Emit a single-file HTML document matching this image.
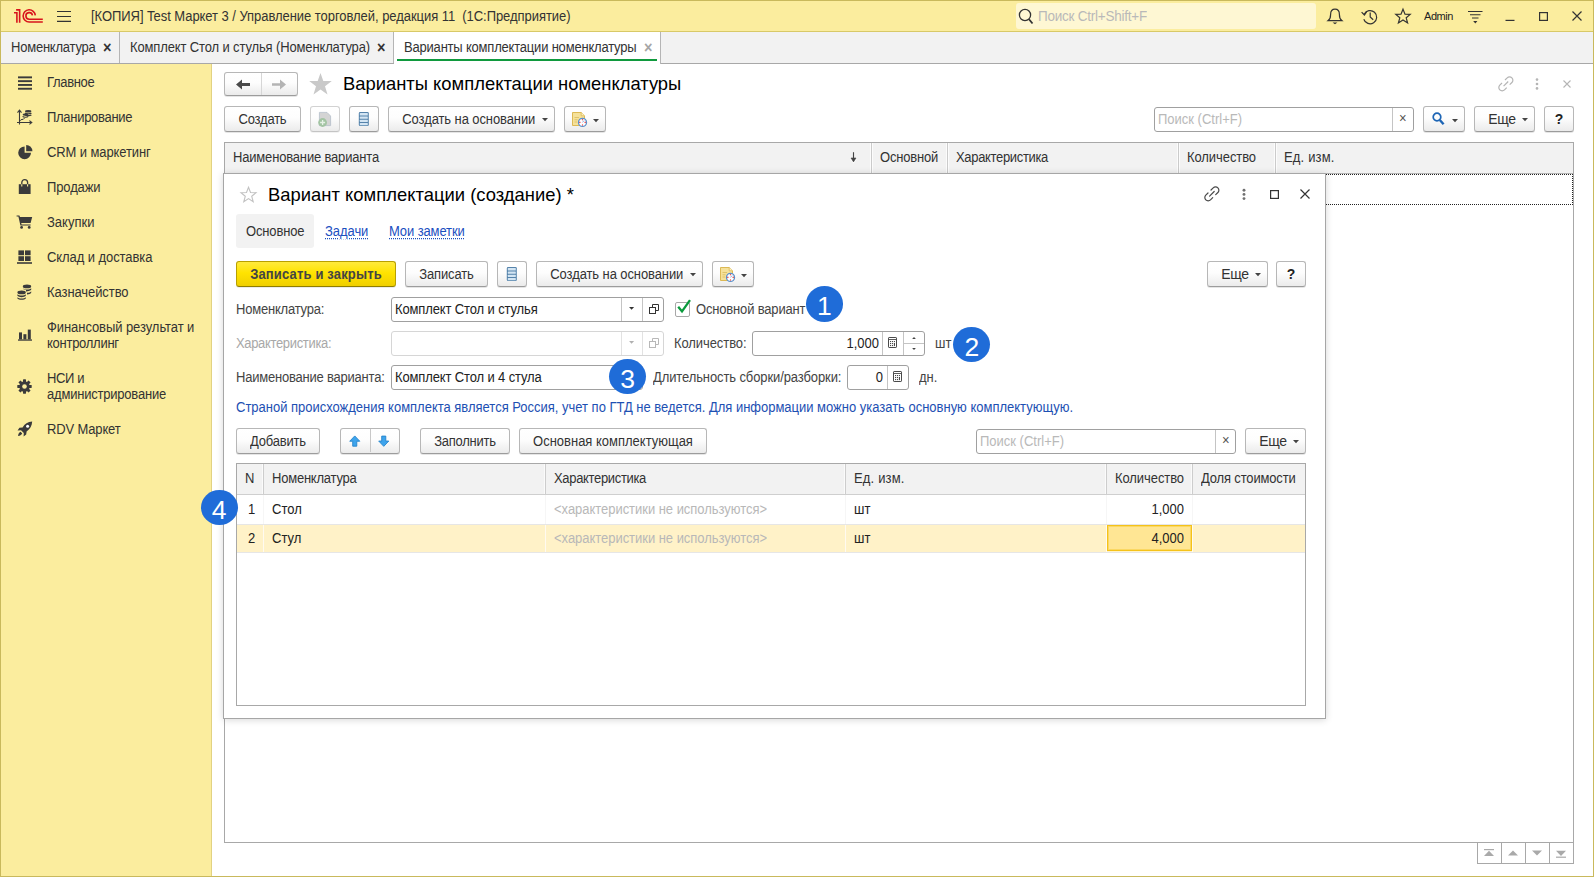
<!DOCTYPE html>
<html lang="ru">
<head>
<meta charset="utf-8">
<title style="letter-spacing:-0.199px">Варианты комплектации номенклатуры</title>
<style>
*{box-sizing:border-box;margin:0;padding:0}
html,body{width:1594px;height:877px;overflow:hidden;background:#fff}
body{font-family:"Liberation Sans",sans-serif;font-size:13px;color:#333;position:relative}
.a{position:absolute;white-space:nowrap}
.t{position:absolute;white-space:nowrap;line-height:16px;height:16px;transform:scaleY(1.075);transform-origin:0 12.5px}
.bt{display:inline-block;transform:scaleY(1.075);transform-origin:0 17px}
/* frame */
#frame{left:0;top:0;width:1594px;height:877px;border:1px solid #c9b95c;pointer-events:none;z-index:50}
#titlebar{left:0;top:0;width:1594px;height:32px;background:#fbed9e;border-bottom:1px solid #d8c968}
#tabbar{left:0;top:32px;width:1594px;height:32px;background:#f2f2f2;border-bottom:1px solid #a8a8a8}
#sidebar{left:0;top:64px;width:211px;height:813px;background:#fbed9e}
#sideline{left:211px;top:64px;width:1px;height:813px;background:#e2d282}
.tab{top:32px;height:31px;border-right:1px solid #b5b5b5}
.tab .t{top:8px}
.x{font-weight:bold;font-size:14.5px}
/* buttons */
.btn{position:absolute;height:26px;border:1px solid #b7b7b7;border-bottom-color:#9c9c9c;border-radius:3px;background:linear-gradient(#ffffff 0%,#fdfdfd 45%,#ebebeb 100%);box-shadow:0 1px 0 rgba(0,0,0,.10);text-align:center;line-height:25px;white-space:nowrap;color:#333}
.btn.y{background:linear-gradient(#ffea3d 0%,#ffe300 45%,#f0cf00 100%);border-color:#b8a000;border-bottom-color:#8f7e00;font-weight:bold;box-shadow:0 1px 0 rgba(0,0,0,.08)}
svg.caret{position:relative;display:inline-block;vertical-align:middle;margin-left:6.5px;top:-0.5px;fill:#444}
/* inputs */
.inp{position:absolute;height:25px;border:1px solid #a0a0a0;border-radius:3px;background:#fff}
.inp .v{position:absolute;top:4px;line-height:16px;transform:scaleY(1.075);transform-origin:0 12.5px}
.inp .sep{position:absolute;top:0;width:1px;height:23px;background:#c4c4c4}
.ph{color:#b9b9b9}
/* tables */
.th{position:absolute;background:#f2f2f2;border-right:1px solid #d0d0d0;height:100%}
svg.car{fill:#444}
.circle{position:absolute;width:37.2px;height:35.6px;border-radius:50%;background:#1f6cd8;color:#fff;font-size:26.5px;line-height:41px;text-align:center;z-index:30}
a.lnk{color:#1b4fbf;text-decoration:underline dotted;text-underline-offset:2px}
svg{position:absolute;overflow:visible}
</style>
</head>
<body>
<!-- TITLE BAR -->
<div id="titlebar" class="a"></div>
<div id="tabbar" class="a"></div>
<div id="sidebar" class="a"></div>
<div id="sideline" class="a"></div>
<div id="frame" class="a"></div>


<!-- logo 1C -->
<svg style="left:0;top:0" width="50" height="32" viewBox="0 0 50 32" fill="none" stroke="#d8141c" stroke-width="1.600">
 <path d="M16.100 9.900H19.650V22.800"/>
 <path d="M14 12.800H16.900V22.800"/>
 <path d="M35.300 15.400A6.100 6.100 0 1 0 29.200 22H42.800"/>
 <path d="M32.450 15.400A3.300 3.300 0 1 0 29.200 19.200H42.800"/>
</svg>
<!-- hamburger -->
<svg style="left:57px;top:10px" width="15" height="13" viewBox="0 0 15 13" stroke="#333" stroke-width="1.150"><path d="M0 1.500H14M0 6.450H14M0 11.400H14"/></svg>
<div class="t" style="letter-spacing:-0.048px;left:91px;top:9px;font-size:13px;color:#333;white-space:pre">[КОПИЯ] Test Маркет 3 / Управление торговлей, редакция 11  (1С:Предприятие)</div>
<div class="a" style="left:1016px;top:3px;width:300px;height:26px;background:#fef7d3;border-radius:3px"></div>
<svg style="left:1018px;top:8px" width="16" height="17" viewBox="0 0 16 17" fill="none" stroke="#333" stroke-width="1.3"><circle cx="7" cy="7" r="5.6"/><path d="M11 11.2L14.5 15.5" stroke-width="1.8"/></svg>
<div class="t" style="letter-spacing:-0.233px;left:1038px;top:9px;color:#b9b9b9;font-size:13.5px">Поиск Ctrl+Shift+F</div>
<!-- bell -->
<svg style="left:1327px;top:8px" width="16" height="17" viewBox="0 0 16 17" fill="none" stroke="#333" stroke-width="1.2"><path d="M1.2 12.6 H14.8 C12.6 11 12.4 9 12.4 6.4 C12.4 3.4 10.6 1.2 8 1.2 C5.4 1.2 3.6 3.4 3.6 6.4 C3.6 9 3.4 11 1.2 12.6 Z"/><path d="M5.6 14.4 H10.4 L8 16.2 Z" fill="#333" stroke="none"/></svg>
<!-- history -->
<svg style="left:1361px;top:9px" width="17" height="16" viewBox="0 0 17 16" fill="none" stroke="#333" stroke-width="1.2"><path d="M3.2 5.2 A6.6 6.6 0 1 1 2.8 10.2"/><path d="M0.6 3.2 L3.4 6 L5.6 3.0" /><path d="M9.2 3.6 V8 L12.2 10.8"/></svg>
<!-- star -->
<svg style="left:1395px;top:8px" width="16" height="16" viewBox="0 0 16 16" fill="none" stroke="#333" stroke-width="1.2" stroke-linejoin="miter"><path d="M8 1.2 L10 6.2 L15.2 6.4 L11.2 9.8 L12.6 15 L8 12 L3.4 15 L4.8 9.8 L0.8 6.4 L6 6.2 Z"/></svg>
<div class="t" style="letter-spacing:-0.438px;left:1424px;top:8px;font-size:11px;color:#222">Admin</div>
<!-- filter -->
<svg style="left:1468px;top:10px" width="15" height="14" viewBox="0 0 15 14" fill="none" stroke="#333" stroke-width="1.1"><path d="M0 1.5H14.5M2 4.8H12.5M4 8H10.5"/><path d="M5.2 11 H9.4 L7.3 13.4Z" fill="#333" stroke="none"/></svg>
<!-- window controls -->
<svg style="left:1505px;top:8px" width="10" height="14" viewBox="0 0 10 14" stroke="#333" stroke-width="1.2"><path d="M0.5 12.4H9.5"/></svg>
<svg style="left:1539px;top:12px" width="9" height="9" viewBox="0 0 9 9" fill="none" stroke="#333" stroke-width="1.2"><rect x="0.6" y="0.6" width="7.8" height="7.8"/></svg>
<svg style="left:1572px;top:11px" width="10" height="10" viewBox="0 0 10 10" stroke="#333" stroke-width="1.2"><path d="M0.5 0.5L9.5 9.5M9.5 0.5L0.5 9.5"/></svg>


<div class="a tab" style="left:0;width:120px"></div>
<div class="t" style="letter-spacing:-0.221px;left:11px;top:40px">Номенклатура</div>
<div class="t x" style="left:103px;top:39.500px">×</div>
<div class="a tab" style="left:120px;width:274px"></div>
<div class="t" style="letter-spacing:-0.133px;left:130px;top:40px">Комплект Стол и стулья (Номенклатура)</div>
<div class="t x" style="left:377px;top:39.500px">×</div>
<div class="a tab" style="left:394px;width:267px;background:#fff;height:32px"></div>
<div class="t" style="letter-spacing:-0.199px;left:404px;top:40px">Варианты комплектации номенклатуры</div>
<div class="t x" style="left:644px;top:39.500px;color:#a6a6a6">×</div>
<div class="a" style="left:397px;top:59px;width:260px;height:2px;background:#109a3e"></div>


<svg style="left:18px;top:76px" width="14" height="14" viewBox="0 0 14 14" fill="#3b3b3b"><rect x="0" y="0.4" width="14" height="1.9"/><rect x="0" y="4.2" width="14" height="1.9"/><rect x="0" y="8" width="14" height="1.9"/><rect x="0" y="11.8" width="14" height="1.9"/></svg>
<svg style="left:16px;top:108.600px" width="17" height="17" viewBox="0 0 17 17" fill="none" stroke="#3b3b3b" stroke-width="1.100"><path d="M3.500 1.500V15.500M1.500 3.600L3.500 1.200L5.500 3.600M1 13.500H15.500M13.400 11.600L15.800 13.500L13.400 15.400"/><path d="M4.200 11.600L6 10.200L7 10.600L8.600 9" stroke-width="1"/><ellipse cx="12.200" cy="2.200" rx="3.200" ry="1.300" fill="#3b3b3b" stroke="none"/><path d="M9 4C10 5.100 14.400 5.100 15.400 4M9 5.800C10 6.900 14.400 6.900 15.400 5.800" stroke-width="1.200"/><ellipse cx="9.400" cy="5.600" rx="2.800" ry="1.200" fill="#3b3b3b" stroke="none"/><path d="M6.600 7.400C7.600 8.500 11.200 8.500 12.200 7.400" stroke-width="1.200"/></svg>
<svg style="left:18px;top:145px" width="15" height="15" viewBox="0 0 15 15" fill="#3b3b3b"><path d="M6.6 1.4 A6.4 6.4 0 1 0 13 7.8 H6.6 Z"/><path d="M8.2 0 A6.2 6.2 0 0 1 14.4 6.2 H8.2 Z"/></svg>
<svg style="left:18px;top:179px" width="14" height="16" viewBox="0 0 14 16" fill="#3b3b3b"><path d="M0.8 5.2 H12.6 V15 H0.8 Z"/><path d="M3.8 7.5 V3.6 A2.9 2.9 0 0 1 9.6 3.6 V7.5" fill="none" stroke="#3b3b3b" stroke-width="1.3"/><path d="M3.8 5.2 V7.6 M9.6 5.2V7.6" stroke="#fbed9e" stroke-width="1.1"/></svg>
<svg style="left:16px;top:215px" width="17" height="14" viewBox="0 0 17 14" fill="#3b3b3b"><path d="M0.6 0.4 H3.4 L4 2 H16.2 L14.6 8 H5.2 L5.6 9.4 H14.6 V10.6 H4.4 L2.4 1.6 H0.6 Z"/><circle cx="5.6" cy="12.4" r="1.4"/><circle cx="13.2" cy="12.4" r="1.4"/></svg>
<svg style="left:17px;top:250px" width="15" height="15" viewBox="0 0 15 15" fill="#3b3b3b"><rect x="1.4" y="0.4" width="5.6" height="4.8"/><rect x="8" y="0.4" width="5.6" height="4.8"/><rect x="1.4" y="6.2" width="5.6" height="4.8"/><rect x="8" y="6.2" width="5.6" height="4.8"/><rect x="0" y="12.2" width="15" height="1.6"/></svg>
<svg style="left:17px;top:284px" width="15" height="16" viewBox="0 0 15 16" fill="#3b3b3b"><ellipse cx="10" cy="2.4" rx="4.2" ry="1.9"/><path d="M5.8 4.2C7 6 13 6 14.2 4.2V5.8C13 7.6 9 7.4 9 7.4V5.9C7.4 5.7 6.4 5.2 5.8 4.2ZM10 8.8C12 8.8 13.6 8.2 14.2 7.2V8.8C13.6 9.8 12 10.4 10 10.4Z"/><ellipse cx="4.6" cy="8.4" rx="4.2" ry="1.9"/><path d="M0.4 10.2C1.6 12 7.6 12 8.8 10.2V11.8C7.6 13.6 1.6 13.6 0.4 11.8ZM0.4 13.2C1.6 15 7.6 15 8.8 13.2V14.4C7.6 16.2 1.6 16.2 0.4 14.4Z"/></svg>
<svg style="left:18px;top:329px" width="14" height="12" viewBox="0 0 14 12" fill="#3b3b3b"><rect x="1" y="3.4" width="3" height="7"/><rect x="5.4" y="5.2" width="3" height="5.2"/><rect x="9.8" y="0.6" width="3" height="9.8"/><rect x="0" y="10.4" width="14" height="1.3"/></svg>
<svg style="left:17px;top:379px" width="15" height="15" viewBox="-7.5 -7.5 15 15"><g fill="#3b3b3b"><circle r="5.2"/><g id="gt"><rect x="-1.5" y="-7.2" width="3" height="14.4" rx="0.4"/></g><use href="#gt" transform="rotate(45)"/><use href="#gt" transform="rotate(90)"/><use href="#gt" transform="rotate(135)"/></g><circle r="2.3" fill="#fbed9e"/></svg>
<svg style="left:17px;top:421px" width="16" height="16" viewBox="0 0 16 16" fill="#3b3b3b"><path d="M15.2 0.6C10.8 0.8 7.6 3 5.6 6.4L2.4 6.8L0.6 9.4L4 9.2L6.8 12L6.6 15.4L9.2 13.6L9.6 10.4C13 8.400 15 5 15.2 0.6Z"/><path d="M3.6 10.8C2.4 11.2 1.4 12.6 1 15C3.400 14.6 4.800 13.6 5.2 12.400Z"/><circle cx="10.6" cy="5.2" r="1.5" fill="#fff"/></svg>
<div class="t" style="letter-spacing:-0.325px;left:47px;top:75px;color:#333">Главное</div>
<div class="t" style="letter-spacing:-0.286px;left:47px;top:110px;color:#333">Планирование</div>
<div class="t" style="letter-spacing:-0.104px;left:47px;top:145px;color:#333">CRM и маркетинг</div>
<div class="t" style="letter-spacing:-0.128px;left:47px;top:180px;color:#333">Продажи</div>
<div class="t" style="letter-spacing:-0.001px;left:47px;top:215px;color:#333">Закупки</div>
<div class="t" style="letter-spacing:-0.074px;left:47px;top:250px;color:#333">Склад и доставка</div>
<div class="t" style="letter-spacing:-0.079px;left:47px;top:285px;color:#333">Казначейство</div>
<div class="t" style="letter-spacing:-0.071px;left:47px;top:320px;color:#333">Финансовый результат и</div>
<div class="t" style="letter-spacing:-0.267px;left:47px;top:336px;color:#333">контроллинг</div>
<div class="t" style="letter-spacing:-0.340px;left:47px;top:371px;color:#333">НСИ и</div>
<div class="t" style="letter-spacing:-0.208px;left:47px;top:387px;color:#333">администрирование</div>
<div class="t" style="letter-spacing:-0.159px;left:47px;top:422px;color:#333">RDV Маркет</div>


<!-- nav buttons -->
<div class="btn" style="left:224px;top:72px;width:74px;height:24px"></div>
<div class="a" style="left:261px;top:73px;width:1px;height:22px;background:#d6d6d6"></div>
<svg style="left:236px;top:79px" width="14" height="11" viewBox="0 0 14 11" fill="#4a4a4a"><path d="M0 5.5L6 0.400V4H14V7H6V10.6Z"/></svg>
<svg style="left:272px;top:79px" width="14" height="11" viewBox="0 0 14 11" fill="#b4b4b4"><path d="M14 5.5L8 0.400V4.300H0V6.700H8V10.600Z"/></svg>
<svg style="left:309px;top:73px" width="23" height="22" viewBox="0 0 23 22" fill="#c9c9c9"><path d="M11.5 0L14.300 8H22.800L16 13.200L18.500 21.600L11.500 16.600L4.500 21.600L7 13.200L0.200 8H8.700Z"/></svg>
<div class="a" style="letter-spacing:-0.001px;left:343px;top:73px;font-size:18.4px;line-height:22px;color:#000">Варианты комплектации номенклатуры</div>
<!-- right icons -->
<svg style="left:1498px;top:76px" width="16" height="16" viewBox="0 0 16 16" fill="none" stroke="#b5b5b5" stroke-width="1.2"><path d="M7 4L9.200 1.800A3.300 3.300 0 0 1 13.900 6.500L11.700 8.700"/><path d="M8.700 11.700L6.500 13.900A3.300 3.300 0 0 1 1.800 9.200L4 7"/><path d="M5.600 10.100L10.200 5.500"/></svg>
<svg style="left:1535px;top:78px" width="4" height="12" viewBox="0 0 4 12" fill="#b5b5b5"><circle cx="2" cy="1.600" r="1.300"/><circle cx="2" cy="6" r="1.300"/><circle cx="2" cy="10.400" r="1.300"/></svg>
<svg style="left:1563px;top:80px" width="8" height="8" viewBox="0 0 8 8" stroke="#b5b5b5" stroke-width="1.100"><path d="M0.500 0.500L7.500 7.500M7.500 0.500L0.500 7.500"/></svg>
<!-- toolbar -->
<div class="btn" style="letter-spacing:-0.229px;left:224px;top:106px;width:77px"><span class="bt">Создать</span></div>
<div class="btn" style="left:310px;top:106px;width:30px;border-color:#d2d2d2;border-bottom-color:#c4c4c4;box-shadow:0 1px 0 rgba(0,0,0,.05)"></div>
<svg style="left:318px;top:112px" width="14" height="16" viewBox="0 0 14 16"><path d="M1.400 0.400H9L12.600 4V13.600H1.400Z" fill="#d4d4d4" stroke="#adb9c6" stroke-width="0.700"/><circle cx="4.600" cy="10.500" r="4.400" fill="#a3c4a3"/><path d="M4.600 8V13M2.100 10.500H7.100" stroke="#e6f1e6" stroke-width="1.300"/></svg>
<div class="btn" style="left:349px;top:106px;width:30px"></div>
<svg style="left:358px;top:112px" width="12" height="16" viewBox="0 0 12 16"><rect x="0.800" y="0.100" width="10" height="14" rx="1.300" fill="#5583ab"/><g fill="#d3e5f3"><rect x="1.800" y="1.100" width="8" height="2.300" rx="0.500"/><rect x="1.800" y="4.400" width="8" height="2.300" rx="0.500"/><rect x="1.800" y="7.700" width="8" height="2.300" rx="0.500"/><rect x="1.800" y="11" width="8" height="2.300" rx="0.500"/></g></svg>
<div class="btn" style="letter-spacing:-0.094px;left:388px;top:106px;width:167px;text-align:left;padding-left:13.300px"><span class="bt">Создать на основании</span><svg class="caret" width="6" height="3.300" viewBox="0 0 6 3.300"><path d="M0 0H6L3 3.300Z"/></svg></div>
<div class="btn" style="left:564px;top:106px;width:42px"></div>
<svg style="left:571px;top:111px" width="17" height="17" viewBox="0 0 17 17"><path d="M1.500 1.500H10.200L13.500 4.800V14.500H1.500Z" fill="#f5e19a" stroke="#dcb955" stroke-width="1"/><path d="M10.200 1.500V4.800H13.500" fill="#fbf0c4" stroke="#dcb955" stroke-width="0.800"/><path d="M3.500 6.500H8M3.500 8.800H6.500M3.500 11H6" stroke="#dcbf63" stroke-width="0.900"/><circle cx="11.500" cy="11.400" r="4" fill="#fff" stroke="#5b8fc9" stroke-width="1.300"/><path d="M11.500 8.200V9.300M11.500 13.500V14.600M8.300 11.400H9.400M13.600 11.400H14.700" stroke="#ee2222" stroke-width="1.100"/><path d="M11.500 11.400L13 9.600" stroke="#7aa0d8" stroke-width="0.900"/></svg>
<svg class="car" style="left:593px;top:118.800px" width="6" height="3.300" viewBox="0 0 6 3.300"><path d="M0 0H6L3 3.300Z"/></svg>
<!-- search -->
<div class="inp" style="left:1154px;top:107px;width:260px"><div class="v ph" style="letter-spacing:-0.003px;left:3px;font-size:13px">Поиск (Ctrl+F)</div><div class="sep" style="left:237px"></div><div class="v" style="left:244px;top:3px;font-size:13px;color:#555">×</div></div>
<div class="btn" style="left:1423px;top:106px;width:42px"></div>
<svg style="left:1432px;top:112px" width="13" height="14" viewBox="0 0 13 14" fill="none" stroke="#1d65b5"><circle cx="5" cy="5" r="3.800" stroke-width="1.700"/><path d="M7.800 8L11.600 12.200" stroke-width="2.400"/></svg>
<svg class="car" style="left:1452px;top:118.800px" width="6" height="3.300" viewBox="0 0 6 3.300"><path d="M0 0H6L3 3.300Z"/></svg>
<div class="btn" style="letter-spacing:-0.400px;left:1474px;top:106px;width:61px;font-size:14px;text-align:left;padding-left:13.300px"><span class="bt">Еще</span><svg class="caret" width="6" height="3.300" viewBox="0 0 6 3.300"><path d="M0 0H6L3 3.300Z"/></svg></div>
<div class="btn" style="left:1544px;top:106px;width:30px;font-weight:bold;font-size:14px;color:#222"><span class="bt">?</span></div>
<!-- list table -->
<div class="a" style="left:224px;top:142px;width:1350px;height:701px;border:1px solid #a8a8a8;background:#fff"></div>
<div class="a" style="left:225px;top:143px;width:1348px;height:31px;background:#f2f2f2;border-bottom:1px solid #b4b4b4"></div>
<div class="a" style="left:870px;top:143px;width:3px;height:30px;background:#fcfcfc"></div><div class="a" style="left:871px;top:143px;width:1px;height:30px;background:#cbcbcb"></div>
<div class="a" style="left:946px;top:143px;width:3px;height:30px;background:#fcfcfc"></div><div class="a" style="left:947px;top:143px;width:1px;height:30px;background:#cbcbcb"></div>
<div class="a" style="left:1177px;top:143px;width:3px;height:30px;background:#fcfcfc"></div><div class="a" style="left:1178px;top:143px;width:1px;height:30px;background:#cbcbcb"></div>
<div class="a" style="left:1274px;top:143px;width:3px;height:30px;background:#fcfcfc"></div><div class="a" style="left:1275px;top:143px;width:1px;height:30px;background:#cbcbcb"></div>
<div class="t" style="letter-spacing:-0.175px;left:233px;top:150px">Наименование варианта</div>
<svg style="left:850px;top:151px" width="7" height="12" viewBox="0 0 7 12" fill="none" stroke="#444" stroke-width="1.200"><path d="M3.500 1V10.600M0.900 7.300L3.500 10.600L6.100 7.300" stroke="#fff" stroke-width="2.600" opacity="0.700"/><path d="M3.500 1.200V10.400"/><path d="M1 7L3.500 10.800L6 7Z" fill="#444" stroke-width="0.600"/></svg>
<div class="t" style="letter-spacing:-0.201px;left:880px;top:150px">Основной</div>
<div class="t" style="letter-spacing:-0.333px;left:956px;top:150px">Характеристика</div>
<div class="t" style="letter-spacing:-0.081px;left:1187px;top:150px">Количество</div>
<div class="t" style="letter-spacing:0.167px;left:1284px;top:150px">Ед. изм.</div>
<!-- focused row dotted -->
<div class="a" style="left:225px;top:174px;width:1348px;height:31px;border:1px dotted #222"></div>
<!-- bottom nav -->
<div class="a" style="left:1477px;top:842px;width:97px;height:22px;border:1px solid #a8a8a8;background:#fff"></div>
<div class="a" style="left:1501px;top:843px;width:1px;height:20px;background:#a8a8a8"></div>
<div class="a" style="left:1525px;top:843px;width:1px;height:20px;background:#a8a8a8"></div>
<div class="a" style="left:1549px;top:843px;width:1px;height:20px;background:#a8a8a8"></div>
<svg style="left:1484px;top:849px" width="10" height="8" viewBox="0 0 10 8" fill="#a9a9a9"><rect x="0" y="0" width="10" height="1.200"/><path d="M5 1.800L10 7H0Z"/></svg>
<svg style="left:1508px;top:850px" width="10" height="6" viewBox="0 0 10 6" fill="#a9a9a9"><path d="M5 0.500L10 5.500H0Z"/></svg>
<svg style="left:1532px;top:850px" width="10" height="6" viewBox="0 0 10 6" fill="#a9a9a9"><path d="M5 5.500L10 0.500H0Z"/></svg>
<svg style="left:1556px;top:850px" width="10" height="8" viewBox="0 0 10 8" fill="#a9a9a9"><rect x="0" y="6.600" width="10" height="1.200"/><path d="M5 6L10 0.800H0Z"/></svg>


<div class="a" style="left:223px;top:173px;width:1103px;height:546px;background:#fff;border:1px solid #a6a6a6;box-shadow:0 1px 7px rgba(0,0,0,.16)"></div>
<svg style="left:240px;top:186px" width="17" height="17" viewBox="0 0 17 17" fill="none" stroke="#c2c2c2" stroke-width="1.100"><path d="M8.500 1.200L10.500 6.500L16 6.700L11.700 10.200L13.200 15.700L8.500 12.600L3.800 15.700L5.300 10.200L1 6.700L6.500 6.500Z"/></svg>
<div class="a" style="letter-spacing:0.018px;left:268px;top:184px;font-size:18.400px;line-height:22px;color:#000">Вариант комплектации (создание) *</div>
<svg style="left:1203.500px;top:185.500px" width="16" height="16" viewBox="0 0 16 16" fill="none" stroke="#4a4a4a" stroke-width="1.200" stroke-linecap="round"><path d="M7 4L9.200 1.800A3.300 3.300 0 0 1 13.900 6.500L11.700 8.700"/><path d="M8.700 11.700L6.500 13.900A3.300 3.300 0 0 1 1.800 9.200L4 7"/><path d="M5.600 10.100L10.200 5.500"/></svg>
<svg style="left:1241.600px;top:188px" width="4" height="12" viewBox="0 0 4 12" fill="#707070"><circle cx="2" cy="2.200" r="1.450"/><circle cx="2" cy="6.400" r="1.450"/><circle cx="2" cy="10.600" r="1.450"/></svg>
<svg style="left:1270px;top:190px" width="9" height="9" viewBox="0 0 9 9" fill="none" stroke="#333" stroke-width="1.200"><rect x="0.600" y="0.600" width="7.800" height="7.800"/></svg>
<svg style="left:1300px;top:189px" width="10" height="10" viewBox="0 0 10 10" stroke="#333" stroke-width="1.200"><path d="M0.500 0.500L9.500 9.500M9.500 0.500L0.500 9.500"/></svg>
<!-- dialog tabs -->
<div class="a" style="left:236px;top:214px;width:78px;height:34px;background:#f2f2f2;border-radius:3px"></div>
<div class="t" style="letter-spacing:-0.160px;left:246px;top:224px">Основное</div>
<div class="t" style="left:325px;top:224px"><a class="lnk" style="letter-spacing:-0.059px">Задачи</a></div>
<div class="t" style="left:389px;top:224px"><a class="lnk" style="letter-spacing:-0.111px">Мои заметки</a></div>
<!-- dialog toolbar -->
<div class="btn y" style="letter-spacing:0.159px;left:236px;top:261px;width:160px;color:#444"><span class="bt">Записать и закрыть</span></div>
<div class="btn" style="letter-spacing:-0.145px;left:405px;top:261px;width:83px"><span class="bt">Записать</span></div>
<div class="btn" style="left:497px;top:261px;width:30px"></div>
<svg style="left:506px;top:267px" width="12" height="16" viewBox="0 0 12 16"><rect x="0.800" y="0.100" width="10" height="14" rx="1.300" fill="#5583ab"/><g fill="#d3e5f3"><rect x="1.800" y="1.100" width="8" height="2.300" rx="0.500"/><rect x="1.800" y="4.400" width="8" height="2.300" rx="0.500"/><rect x="1.800" y="7.700" width="8" height="2.300" rx="0.500"/><rect x="1.800" y="11" width="8" height="2.300" rx="0.500"/></g></svg>
<div class="btn" style="letter-spacing:-0.094px;left:536px;top:261px;width:167px;text-align:left;padding-left:13.300px"><span class="bt">Создать на основании</span><svg class="caret" width="6" height="3.300" viewBox="0 0 6 3.300"><path d="M0 0H6L3 3.300Z"/></svg></div>
<div class="btn" style="left:712px;top:261px;width:42px"></div>
<svg style="left:719px;top:266px" width="17" height="17" viewBox="0 0 17 17"><path d="M1.500 1.500H10.200L13.500 4.800V14.500H1.500Z" fill="#f5e19a" stroke="#dcb955" stroke-width="1"/><path d="M10.200 1.500V4.800H13.500" fill="#fbf0c4" stroke="#dcb955" stroke-width="0.800"/><path d="M3.500 6.500H8M3.500 8.800H6.500M3.500 11H6" stroke="#dcbf63" stroke-width="0.900"/><circle cx="11.500" cy="11.400" r="4" fill="#fff" stroke="#5b8fc9" stroke-width="1.300"/><path d="M11.500 8.200V9.300M11.500 13.500V14.600M8.300 11.400H9.400M13.600 11.400H14.700" stroke="#ee2222" stroke-width="1.100"/><path d="M11.500 11.400L13 9.600" stroke="#7aa0d8" stroke-width="0.900"/></svg>
<svg class="car" style="left:741px;top:273.800px" width="6" height="3.300" viewBox="0 0 6 3.300"><path d="M0 0H6L3 3.300Z"/></svg>
<div class="btn" style="letter-spacing:-0.400px;left:1207px;top:261px;width:61px;font-size:14px;text-align:left;padding-left:13.300px"><span class="bt">Еще</span><svg class="caret" width="6" height="3.300" viewBox="0 0 6 3.300"><path d="M0 0H6L3 3.300Z"/></svg></div>
<div class="btn" style="left:1276px;top:261px;width:30px;font-weight:bold;font-size:14px;color:#222"><span class="bt">?</span></div>
<!-- form row 1 -->
<div class="t" style="letter-spacing:-0.205px;left:236px;top:302px;color:#444">Номенклатура:</div>
<div class="inp" style="left:391px;top:297px;width:273px"><div class="v" style="letter-spacing:-0.128px;left:3px;color:#222">Комплект Стол и стулья</div><div class="sep" style="left:229px"></div><div class="sep" style="left:250px"></div><svg class="car" style="left:237px;top:9.300px;fill:#333" width="5.200" height="2.800" viewBox="0 0 6 3.300"><path d="M0 0H6L3 3.300Z"/></svg>
<svg style="left:257px;top:6px" width="10" height="10" viewBox="0 0 10 10" fill="none" stroke="#333" stroke-width="1"><path d="M3.500 3.500V0.500H9.500V6.500H6.500"/><rect x="0.500" y="3.500" width="6" height="6"/></svg></div>
<div class="a" style="left:675px;top:302px;width:15px;height:15px;border:1px solid #a8a8a8;border-radius:2px;background:#fff"></div>
<svg style="left:677px;top:299px" width="15" height="15" viewBox="0 0 15 15" fill="none" stroke="#0a9a3c" stroke-width="2.300"><path d="M1.200 7.800L5 12.400L13 1.200"/></svg>
<div class="t" style="letter-spacing:-0.166px;left:696px;top:302px;color:#444">Основной вариант</div>
<!-- form row 2 -->
<div class="t" style="letter-spacing:-0.338px;left:236px;top:336px;color:#a8a8a8">Характеристика:</div>
<div class="inp" style="left:391px;top:331px;width:273px;border-color:#d6d6d6"><div class="sep" style="left:229px;background:#e2e2e2"></div><div class="sep" style="left:250px;background:#e2e2e2"></div><svg class="car" style="left:237px;top:9.300px;fill:#b0b0b0" width="5.200" height="2.800" viewBox="0 0 6 3.300"><path d="M0 0H6L3 3.300Z"/></svg>
<svg style="left:257px;top:6px" width="10" height="10" viewBox="0 0 10 10" fill="none" stroke="#b8b8b8" stroke-width="1"><path d="M3.500 3.500V0.500H9.500V6.500H6.500"/><rect x="0.500" y="3.500" width="6" height="6"/></svg></div>
<div class="t" style="letter-spacing:-0.085px;left:674px;top:336px;color:#444">Количество:</div>
<div class="inp" style="left:752px;top:331px;width:173px"><div class="v" style="right:45px;color:#222">1,000</div><div class="sep" style="left:129px"></div><div class="sep" style="left:150px"></div><div class="a" style="left:151px;top:11px;width:20px;height:1px;background:#c4c4c4"></div>
<svg style="left:135px;top:5px" width="9" height="11" viewBox="0 0 9 11"><rect x="0.500" y="0.500" width="8" height="10" rx="0.600" fill="#fff" stroke="#4a4a4a"/><path d="M0.500 2.500H8.500" stroke="#4a4a4a" stroke-width="0.900"/><g fill="#4a4a4a"><rect x="2" y="4" width="1.100" height="1.100"/><rect x="3.950" y="4" width="1.100" height="1.100"/><rect x="5.900" y="4" width="1.100" height="1.100"/><rect x="2" y="6" width="1.100" height="1.100"/><rect x="3.950" y="6" width="1.100" height="1.100"/><rect x="2" y="8" width="1.100" height="1.100"/><rect x="3.950" y="8" width="1.100" height="1.100"/><rect x="5.900" y="6" width="1.100" height="3.100"/></g></svg>
<svg style="left:158.800px;top:5px" width="4" height="14" viewBox="0 0 4 14" fill="#444"><path d="M2 0L3.900 2.100H0.100Z"/><path d="M2 13.100L3.900 11H0.100Z"/></svg></div>
<div class="t" style="left:935px;top:336px;color:#444">шт</div>
<!-- form row 3 -->
<div class="t" style="letter-spacing:-0.213px;left:236px;top:370px;color:#444">Наименование варианта:</div>
<div class="inp" style="left:391px;top:365px;width:252px"><div class="v" style="letter-spacing:-0.134px;left:3px;color:#222">Комплект Стол и 4 стула</div></div>
<div class="t" style="letter-spacing:-0.108px;left:653px;top:370px;color:#444">Длительность сборки/разборки:</div>
<div class="inp" style="left:847px;top:365px;width:62px"><div class="v" style="right:25px;color:#222">0</div><div class="sep" style="left:39px"></div>
<svg style="left:45px;top:5px" width="9" height="11" viewBox="0 0 9 11"><rect x="0.500" y="0.500" width="8" height="10" rx="0.600" fill="#fff" stroke="#4a4a4a"/><path d="M0.500 2.500H8.500" stroke="#4a4a4a" stroke-width="0.900"/><g fill="#4a4a4a"><rect x="2" y="4" width="1.100" height="1.100"/><rect x="3.950" y="4" width="1.100" height="1.100"/><rect x="5.900" y="4" width="1.100" height="1.100"/><rect x="2" y="6" width="1.100" height="1.100"/><rect x="3.950" y="6" width="1.100" height="1.100"/><rect x="2" y="8" width="1.100" height="1.100"/><rect x="3.950" y="8" width="1.100" height="1.100"/><rect x="5.900" y="6" width="1.100" height="3.100"/></g></svg></div>
<div class="t" style="left:919px;top:370px;color:#444">дн.</div>
<div class="t" style="letter-spacing:-0.012px;left:236px;top:400px;color:#1d50b3">Страной происхождения комплекта является Россия, учет по ГТД не ведется. Для информации можно указать основную комплектующую.</div>
<!-- toolbar 2 -->
<div class="btn" style="letter-spacing:-0.207px;left:236px;top:428px;width:84px"><span class="bt">Добавить</span></div>
<div class="btn" style="left:340px;top:428px;width:60px"></div>
<div class="a" style="left:370px;top:429px;width:1px;height:23px;background:#c8c8c8"></div>
<svg style="left:348.700px;top:434.800px" width="11.500" height="12.300" viewBox="0 0 13 13"><path d="M6.500 0.600L12.200 6.600H8.800V12.200H4.200V6.600H0.800Z" fill="#3ea4ec" stroke="#2384cc" stroke-width="1"/></svg>
<svg style="left:377.800px;top:434.800px" width="11.500" height="12.300" viewBox="0 0 13 13"><path d="M6.500 12.400L12.200 6.400H8.800V0.800H4.200V6.400H0.800Z" fill="#3ea4ec" stroke="#2384cc" stroke-width="1"/></svg>
<div class="btn" style="letter-spacing:-0.259px;left:420px;top:428px;width:90px"><span class="bt">Заполнить</span></div>
<div class="btn" style="letter-spacing:-0.009px;left:519px;top:428px;width:188px"><span class="bt">Основная комплектующая</span></div>
<div class="inp" style="left:976px;top:429px;width:260px"><div class="v ph" style="letter-spacing:-0.003px;left:3px;font-size:13px">Поиск (Ctrl+F)</div><div class="sep" style="left:238px"></div><div class="v" style="left:245px;top:3px;font-size:13px;color:#555">×</div></div>
<div class="btn" style="letter-spacing:-0.400px;left:1245px;top:428px;width:61px;font-size:14px;text-align:left;padding-left:13.300px"><span class="bt">Еще</span><svg class="caret" width="6" height="3.300" viewBox="0 0 6 3.300"><path d="M0 0H6L3 3.300Z"/></svg></div>
<!-- inner table -->
<div class="a" style="left:236px;top:463px;width:1070px;height:243px;border:1px solid #a8a8a8;background:#fff"></div>
<div class="a" style="left:237px;top:464px;width:1068px;height:31px;background:#f2f2f2;border-bottom:1px solid #cfcfcf"></div>
<div class="a" style="left:237px;top:524px;width:1068px;height:1px;background:#e6e6e6"></div>
<div class="a" style="left:237px;top:525px;width:1068px;height:27px;background:#fff2c8"></div>
<div class="a" style="left:237px;top:552px;width:1068px;height:1px;background:#e6e6e6"></div>
<div class="a" style="left:1107px;top:525px;width:85px;height:26px;background:#ffe694;border:1px solid #f5c21a;box-shadow:inset 0 0 0 1px rgba(245,194,26,.4)"></div>
<div class="a" style="left:263px;top:464px;width:1px;height:30px;background:#cdcdcd"></div><div class="a" style="left:262px;top:464px;width:1px;height:30px;background:#fbfbfb"></div><div class="a" style="left:263px;top:525px;width:1px;height:27px;background:#fffaf0"></div><div class="a" style="left:263px;top:495px;width:1px;height:29px;background:#f6f6f6"></div>
<div class="a" style="left:545px;top:464px;width:1px;height:30px;background:#cdcdcd"></div><div class="a" style="left:544px;top:464px;width:1px;height:30px;background:#fbfbfb"></div><div class="a" style="left:545px;top:525px;width:1px;height:27px;background:#fffaf0"></div><div class="a" style="left:545px;top:495px;width:1px;height:29px;background:#f6f6f6"></div>
<div class="a" style="left:845px;top:464px;width:1px;height:30px;background:#cdcdcd"></div><div class="a" style="left:844px;top:464px;width:1px;height:30px;background:#fbfbfb"></div><div class="a" style="left:845px;top:525px;width:1px;height:27px;background:#fffaf0"></div><div class="a" style="left:845px;top:495px;width:1px;height:29px;background:#f6f6f6"></div>
<div class="a" style="left:1106px;top:464px;width:1px;height:30px;background:#cdcdcd"></div><div class="a" style="left:1105px;top:464px;width:1px;height:30px;background:#fbfbfb"></div><div class="a" style="left:1106px;top:525px;width:1px;height:27px;background:#fffaf0"></div><div class="a" style="left:1106px;top:495px;width:1px;height:29px;background:#f6f6f6"></div>
<div class="a" style="left:1192px;top:464px;width:1px;height:30px;background:#cdcdcd"></div><div class="a" style="left:1191px;top:464px;width:1px;height:30px;background:#fbfbfb"></div><div class="a" style="left:1192px;top:525px;width:1px;height:27px;background:#fffaf0"></div><div class="a" style="left:1192px;top:495px;width:1px;height:29px;background:#f6f6f6"></div>
<div class="t" style="left:245px;top:471px">N</div>
<div class="t" style="letter-spacing:-0.221px;left:272px;top:471px">Номенклатура</div>
<div class="t" style="letter-spacing:-0.333px;left:554px;top:471px">Характеристика</div>
<div class="t" style="letter-spacing:0.167px;left:854px;top:471px">Ед. изм.</div>
<div class="t" style="letter-spacing:-0.081px;left:1115px;top:471px">Количество</div>
<div class="t" style="letter-spacing:-0.159px;left:1201px;top:471px">Доля стоимости</div>
<div class="t" style="left:248px;top:502px;color:#222">1</div>
<div class="t" style="left:272px;top:502px;color:#222">Стол</div>
<div class="t" style="letter-spacing:-0.035px;left:554px;top:502px;color:#b8b8b8">&lt;характеристики не используются&gt;</div>
<div class="t" style="left:854px;top:502px;color:#222">шт</div>
<div class="t" style="right:410px;top:502px;color:#222">1,000</div>
<div class="t" style="left:248px;top:531px;color:#222">2</div>
<div class="t" style="left:272px;top:531px;color:#222">Стул</div>
<div class="t" style="letter-spacing:-0.035px;left:554px;top:531px;color:#b8b8b8">&lt;характеристики не используются&gt;</div>
<div class="t" style="left:854px;top:531px;color:#222">шт</div>
<div class="t" style="right:410px;top:531px;color:#222">4,000</div>
<!-- circles -->
<div class="circle" style="left:805.800px;top:286.400px">1</div>
<div class="circle" style="left:953.200px;top:326.700px">2</div>
<div class="circle" style="left:609px;top:358.700px">3</div>
<div class="circle" style="left:200.600px;top:489.800px">4</div>

</body>
</html>
